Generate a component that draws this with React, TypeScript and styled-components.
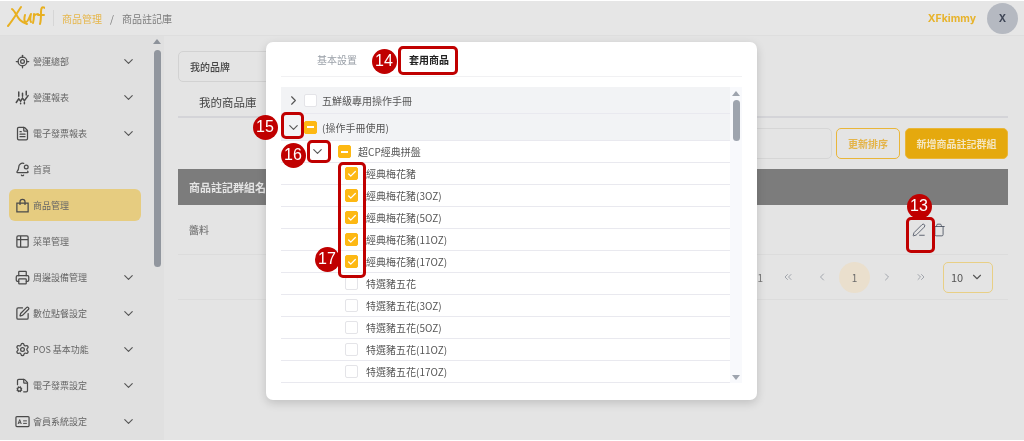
import React from "react";
import styled, { createGlobalStyle } from "styled-components";
import {
    BellDot,
    Check,
    ChevronDown,
    ChevronLeft,
    ChevronRight,
    ChevronsLeft,
    ChevronsRight,
    FileCog,
    FileText,
    LocateFixed,
    PenLine,
    Printer,
    Settings,
    SquarePen,
    Table2,
    Trash,
} from "lucide-react";

const GlobalStyle = createGlobalStyle`
    html, body {
        margin: 0;
        padding: 0;
        height: 441px;
        overflow: hidden;
        background: #fff;
        font-family: "Noto Sans CJK TC", "Noto Sans", sans-serif;
    }
    * { box-sizing: border-box; }
`;

const Page = styled.div`
    position: relative;
    width: 1024px;
    height: 439px;
    margin-top: 1px;
    background: #e4e4e4;
    overflow: hidden;
    display: flex;
    flex-direction: column;
    filter: blur(0.35px);
`;

const TopBar = styled.header`
    height: 35px;
    flex-shrink: 0;
    display: flex;
    align-items: center;
    padding: 0 6px 0 7px;
    background: #e6e6e6;
    border-bottom: 1px solid #dedede;
`;

const LogoDivider = styled.span`
    width: 1px;
    height: 16px;
    margin: 0 8px 0 8px;
    background: #d6d6d6;
`;

const Crumb = styled.span<{ $active?: boolean }>`
    font-size: 10px;
    color: ${p => (p.$active ? "#e6b64a" : "#7b7b7b")};
`;

const CrumbSlash = styled.span`
    margin: 0 8px;
    font-size: 10px;
    color: #7b7b7b;
`;

const UserArea = styled.div`
    margin-left: auto;
    display: flex;
    align-items: center;
    gap: 11px;
`;

const UserName = styled.span`
    font-family: "Inter", sans-serif;
    font-size: 10.5px;
    font-weight: 700;
    color: #e7b32c;
`;

const Avatar = styled.div`
    width: 31px;
    height: 31px;
    border-radius: 50%;
    background: #b5b9c1;
    color: #3f4656;
    font-family: "Inter", sans-serif;
    font-size: 10px;
    font-weight: 700;
    display: flex;
    align-items: center;
    justify-content: center;
`;

const Body = styled.div`
    flex: 1;
    display: flex;
    min-height: 0;
`;

const Sidebar = styled.aside`
    position: relative;
    width: 164px;
    flex-shrink: 0;
    background: #e0e0e0;
    padding: 9px 0 0 9px;
    display: flex;
    flex-direction: column;
    overflow: hidden;
`;

const NavItem = styled.div<{ $active?: boolean }>`
    width: 132px;
    height: 32px;
    margin-bottom: 4px;
    flex-shrink: 0;
    padding: 0 5px 0 6px;
    border-radius: 6px;
    display: flex;
    align-items: center;
    gap: 3px;
    color: #555;
    background: ${p => (p.$active ? "#e6cc80" : "transparent")};

    svg:first-child {
        flex-shrink: 0;
        color: #4a4a4a;
    }
`;

const NavLabel = styled.span`
    flex: 1;
    font-size: 9px;
    white-space: nowrap;
    color: #666;
`;

const SideTrack = styled.div`
    position: absolute;
    top: 3px;
    left: 153px;
    width: 8px;
    display: flex;
    flex-direction: column;
    align-items: center;
    gap: 6px;
`;

const ArrowUp = styled.span<{ $color: string }>`
    width: 0;
    height: 0;
    border-left: 4px solid transparent;
    border-right: 4px solid transparent;
    border-bottom: 5px solid ${p => p.$color};
`;

const ArrowDown = styled.span<{ $color: string }>`
    width: 0;
    height: 0;
    margin-top: auto;
    border-left: 4px solid transparent;
    border-right: 4px solid transparent;
    border-top: 5px solid ${p => p.$color};
`;

const SideThumb = styled.div`
    width: 7px;
    height: 217px;
    border-radius: 4px;
    background: #91969e;
`;

const Main = styled.main`
    flex: 1;
    min-width: 0;
    padding: 15px 16px 0 14px;
    display: flex;
    flex-direction: column;
`;

const BrandSelect = styled.div`
    width: 200px;
    height: 31px;
    padding-left: 11px;
    border: 1px solid #d2d2d2;
    border-radius: 5px;
    display: flex;
    align-items: center;
    font-size: 10px;
    font-weight: 500;
    color: #444;
`;

const TabRow = styled.div`
    margin-top: 10px;
    height: 26px;
    padding: 0 0 4px 21px;
    border-bottom: 2px solid #d4d4d8;
    font-size: 11.5px;
    color: #444;
    display: flex;
    align-items: center;
`;

const ActionRow = styled.div`
    margin-top: 10px;
    display: flex;
    justify-content: flex-end;
    gap: 4px;
`;

const SearchBox = styled.div`
    width: 200px;
    height: 31px;
    border: 1px solid #d6d6d6;
    border-radius: 5px;
`;

const OutlineButton = styled.div`
    width: 64px;
    height: 31px;
    border: 1px solid #e9b63a;
    border-radius: 5px;
    color: #e4b44a;
    font-size: 10px;
    font-weight: 700;
    display: flex;
    align-items: center;
    justify-content: center;
`;

const FillButton = styled(OutlineButton)`
    width: 103px;
    margin-left: 1px;
    background: #e5a90e;
    color: #f4e6c0;
`;

const TableHead = styled.div`
    margin-top: 10px;
    height: 36px;
    padding-left: 11px;
    background: #7c7c7c;
    color: #e4e4e4;
    font-size: 11px;
    font-weight: 700;
    display: flex;
    align-items: center;
`;

const TableRow = styled.div`
    height: 50px;
    padding: 0 62px 0 11px;
    border-bottom: 1px solid #dcdcdc;
    display: flex;
    align-items: center;
    justify-content: space-between;
    font-size: 10px;
    color: #666;
`;

const RowIcons = styled.div`
    display: flex;
    align-items: center;
    gap: 6px;
    color: #4e5563;
`;

const Pager = styled.div`
    height: 45px;
    padding-right: 15px;
    border-bottom: 1px solid #dcdcdc;
    display: flex;
    align-items: center;
    justify-content: flex-end;
    font-size: 10px;
    color: #777;
`;

const PagerCount = styled.span`
    margin-right: 8px;
`;

const PagerIcon = styled.span`
    width: 34px;
    display: flex;
    justify-content: center;
    color: #a2a6ad;
`;

const PageDot = styled.span`
    width: 31px;
    height: 31px;
    border-radius: 50%;
    background: #eadfcd;
    display: flex;
    align-items: center;
    justify-content: center;
    color: #6b6b6b;
`;

const SizeSelect = styled.div`
    width: 50px;
    height: 31px;
    margin-left: 5px;
    padding: 0 8px 0 7px;
    border: 1px solid #e8cf85;
    border-radius: 5px;
    display: flex;
    align-items: center;
    justify-content: space-between;
    font-size: 11px;
    color: #555;
`;

/* modal + annotation layers sit over the page */
const Modal = styled.section`
    position: absolute;
    top: 41px;
    left: 266px;
    width: 491px;
    height: 358px;
    padding: 0 15px;
    background: #fff;
    border-radius: 7px;
    box-shadow: 0 3px 10px rgba(0, 0, 0, 0.16);
    display: flex;
    flex-direction: column;
`;

const ModalTabs = styled.div`
    height: 35px;
    flex-shrink: 0;
    padding-left: 36px;
    border-bottom: 1px solid #f1f1f3;
    display: flex;
    align-items: center;
    gap: 52px;
`;

const ModalTab = styled.span<{ $active?: boolean }>`
    font-size: 10px;
    font-weight: ${p => (p.$active ? 700 : 400)};
    color: ${p => (p.$active ? "#222" : "#9aa0a8")};
`;

const TreeWrap = styled.div`
    margin-top: 10px;
    display: flex;
`;

const Tree = styled.div`
    flex: 1;
    min-width: 0;
`;

const TreeRow = styled.div<{ $height: number; $indent: number; $shaded?: boolean }>`
    height: ${p => p.$height}px;
    padding-left: ${p => p.$indent}px;
    border-bottom: 1px solid #e9e9ef;
    background: ${p => (p.$shaded ? "#f2f3f5" : "#fff")};
    display: flex;
    align-items: center;
    color: #555;
    font-size: 10px;
    white-space: nowrap;
`;

const Caret = styled.span<{ $gap: number }>`
    width: 21px;
    margin-right: ${p => p.$gap}px;
    flex-shrink: 0;
    display: flex;
    justify-content: center;
    color: #555;
`;

const Box = styled.span<{ $state: "off" | "on" | "mixed"; $gap: number }>`
    width: 13px;
    height: 13px;
    flex-shrink: 0;
    margin-right: ${p => p.$gap}px;
    border-radius: 2px;
    display: flex;
    align-items: center;
    justify-content: center;
    color: #fff;
    background: ${p => (p.$state === "off" ? "#fff" : "#fdb813")};
    border: 1px solid ${p => (p.$state === "off" ? "#e4e4e8" : "#fdb813")};
`;

const Dash = styled.span`
    width: 7px;
    height: 2px;
    background: #fff;
`;

const TreeBar = styled.div`
    width: 12px;
    flex-shrink: 0;
    background: #f8f9fc;
    padding: 4px 0 3px;
    display: flex;
    flex-direction: column;
    align-items: center;
    gap: 4px;
`;

const TreeThumb = styled.div`
    width: 7px;
    height: 41px;
    border-radius: 4px;
    background: #9ea4ae;
`;

const Badge = styled.span<{ $x: number; $y: number }>`
    position: absolute;
    left: ${p => p.$x - 12.5}px;
    top: ${p => p.$y - 12.5}px;
    width: 25px;
    height: 25px;
    border-radius: 50%;
    background: #c00000;
    color: #fff;
    font-family: "Liberation Sans", sans-serif;
    font-size: 16px;
    display: flex;
    align-items: center;
    justify-content: center;
`;

const Mark = styled.span<{ $x: number; $y: number; $w: number; $h: number }>`
    position: absolute;
    left: ${p => p.$x}px;
    top: ${p => p.$y}px;
    width: ${p => p.$w}px;
    height: ${p => p.$h}px;
    border: 3px solid #c00000;
    border-radius: 5px;
`;

const nav = [
    { label: "營運總部", icon: <LocateFixed size={15} />, arrow: true },
    { label: "營運報表", icon: <ChartIcon />, arrow: true },
    { label: "電子發票報表", icon: <FileText size={15} />, arrow: true },
    { label: "首頁", icon: <BellDot size={15} />, arrow: false },
    { label: "商品管理", icon: <BagIcon />, arrow: false, active: true },
    { label: "菜單管理", icon: <Table2 size={15} />, arrow: false },
    { label: "周邊設備管理", icon: <Printer size={15} />, arrow: true },
    { label: "數位點餐設定", icon: <SquarePen size={15} />, arrow: true },
    { label: "POS 基本功能", icon: <Settings size={15} />, arrow: true },
    { label: "電子發票設定", icon: <FileCog size={15} />, arrow: true },
    { label: "會員系統設定", icon: <CardIcon />, arrow: true },
];

const names = ["經典梅花豬", "經典梅花豬(3OZ)", "經典梅花豬(5OZ)", "經典梅花豬(11OZ)", "經典梅花豬(17OZ)"];
const otherNames = ["特選豬五花", "特選豬五花(3OZ)", "特選豬五花(5OZ)", "特選豬五花(11OZ)", "特選豬五花(17OZ)"];

function ChartIcon() {
    return (
        <svg width="15" height="15" viewBox="0 0 24 24" fill="none" stroke="currentColor" strokeWidth="2.4" strokeLinecap="round">
            <path d="M2 20l4-6 3 4 3-5 3 4 6-8" />
            <path d="M6 3v7M12 5v5M18 2v6M9 21v1M15 20v2" />
        </svg>
    );
}

function BagIcon() {
    return (
        <svg width="15" height="15" viewBox="0 0 24 24" fill="none" stroke="currentColor" strokeWidth="2">
            <path d="M3 8h18v14H3z" />
            <path d="M8 11V6a4 4 0 0 1 8 0v5" />
        </svg>
    );
}

function CardIcon() {
    return (
        <svg width="15" height="15" viewBox="0 0 24 24" fill="none" stroke="currentColor" strokeWidth="2">
            <rect x="1.5" y="4" width="21" height="16" rx="1.5" />
            <path d="M5 16l2.5-7 2.5 7M6 14h3M13 11h6M13 15h6" strokeWidth="1.6" />
        </svg>
    );
}

function Logo() {
    return (
        <svg width="38" height="28" viewBox="0 0 38 28" fill="none" stroke="#e8b021" strokeWidth="2" strokeLinecap="round" strokeLinejoin="round">
            <path d="M14 3C10 9 6 16 1 22" />
            <path d="M5 5c3 2 5 8 8 11 2 2 4 3 7 4" />
            <path d="M18 11c-1 3-1 7 1 7s3-4 5-8c-1 3-1 7 0 8" />
            <path d="M27 10c0 3 0 6-1 9M27 12c1-2 2-2 4-2" />
            <path d="M38 4c-3-2-4 0-4 4 0 5 0 9-1 12M31 11h6" />
        </svg>
    );
}

export default function App() {
    return (
        <Page>
            <GlobalStyle />
            <TopBar>
                <Logo />
                <LogoDivider />
                <Crumb $active>商品管理</Crumb>
                <CrumbSlash>/</CrumbSlash>
                <Crumb>商品註記庫</Crumb>
                <UserArea>
                    <UserName>XFkimmy</UserName>
                    <Avatar>X</Avatar>
                </UserArea>
            </TopBar>
            <Body>
                <Sidebar>
                    {nav.map(item => (
                        <NavItem key={item.label} $active={item.active}>
                            {item.icon}
                            <NavLabel>{item.label}</NavLabel>
                            {item.arrow && <ChevronDown size={15} strokeWidth={1.8} />}
                        </NavItem>
                    ))}
                    <SideTrack>
                        <ArrowUp $color="#8d929a" />
                        <SideThumb />
                    </SideTrack>
                </Sidebar>
                <Main>
                    <BrandSelect>我的品牌</BrandSelect>
                    <TabRow>我的商品庫</TabRow>
                    <ActionRow>
                        <SearchBox />
                        <OutlineButton>更新排序</OutlineButton>
                        <FillButton>新增商品註記群組</FillButton>
                    </ActionRow>
                    <TableHead>商品註記群組名稱</TableHead>
                    <TableRow>
                        醬料
                        <RowIcons>
                            <PenLine size={14} strokeWidth={1.5} />
                            <Trash size={14} strokeWidth={1.5} />
                        </RowIcons>
                    </TableRow>
                    <Pager>
                        <PagerCount>1</PagerCount>
                        <PagerIcon>
                            <ChevronsLeft size={12} />
                        </PagerIcon>
                        <PagerIcon>
                            <ChevronLeft size={12} />
                        </PagerIcon>
                        <PageDot>1</PageDot>
                        <PagerIcon>
                            <ChevronRight size={12} />
                        </PagerIcon>
                        <PagerIcon>
                            <ChevronsRight size={12} />
                        </PagerIcon>
                        <SizeSelect>
                            10
                            <ChevronDown size={14} strokeWidth={1.9} />
                        </SizeSelect>
                    </Pager>
                </Main>
            </Body>

            <Modal>
                <ModalTabs>
                    <ModalTab>基本設置</ModalTab>
                    <ModalTab $active>套用商品</ModalTab>
                </ModalTabs>
                <TreeWrap>
                    <Tree>
                        <TreeRow $height={27} $indent={2} $shaded>
                            <Caret $gap={0}>
                                <ChevronRight size={15} strokeWidth={1.8} />
                            </Caret>
                            <Box $state="off" $gap={5} />
                            五鮮級專用操作手冊
                        </TreeRow>
                        <TreeRow $height={27} $indent={2} $shaded>
                            <Caret $gap={0}>
                                <ChevronDown size={15} strokeWidth={1.8} />
                            </Caret>
                            <Box $state="mixed" $gap={5}>
                                <Dash />
                            </Box>
                            (操作手冊使用)
                        </TreeRow>
                        <TreeRow $height={22} $indent={26}>
                            <Caret $gap={10}>
                                <ChevronDown size={15} strokeWidth={1.8} />
                            </Caret>
                            <Box $state="mixed" $gap={7}>
                                <Dash />
                            </Box>
                            超CP經典拼盤
                        </TreeRow>
                        {names.map(name => (
                            <TreeRow key={name} $height={22} $indent={64}>
                                <Box $state="on" $gap={8}>
                                    <Check size={10} strokeWidth={3} />
                                </Box>
                                {name}
                            </TreeRow>
                        ))}
                        {otherNames.map(name => (
                            <TreeRow key={name} $height={22} $indent={64}>
                                <Box $state="off" $gap={8} />
                                {name}
                            </TreeRow>
                        ))}
                    </Tree>
                    <TreeBar>
                        <ArrowUp $color="#9ea4ae" />
                        <TreeThumb />
                        <ArrowDown $color="#9ea4ae" />
                    </TreeBar>
                </TreeWrap>
            </Modal>

            <Mark $x={398} $y={45} $w={60} $h={29} />
            <Badge $x={384} $y={60}>14</Badge>
            <Mark $x={281} $y={111} $w={23} $h={27} />
            <Badge $x={265} $y={126}>15</Badge>
            <Mark $x={307} $y={139} $w={24} $h={23} />
            <Badge $x={293} $y={154}>16</Badge>
            <Mark $x={338} $y={161} $w={28} $h={116} />
            <Badge $x={327} $y={258}>17</Badge>
            <Mark $x={906} $y={216} $w={29} $h={36} />
            <Badge $x={919} $y={205}>13</Badge>
        </Page>
    );
}
